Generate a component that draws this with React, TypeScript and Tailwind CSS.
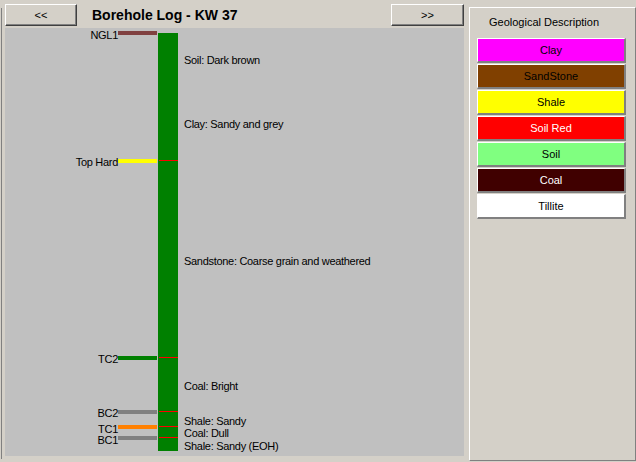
import React from 'react';

const markers = [
  { name: 'NGL1', top: 3, color: 'bg-[#804040]', labelTop: 1, red: null },
  { name: 'Top Hard', top: 131, color: 'bg-[#ffff00]', labelTop: 128, red: 132 },
  { name: 'TC2', top: 328, color: 'bg-[#008000]', labelTop: 325, red: 329 },
  { name: 'BC2', top: 382, color: 'bg-[#808080]', labelTop: 379, red: 383 },
  { name: 'TC1', top: 397, color: 'bg-[#ff8000]', labelTop: 395, red: 398 },
  { name: 'BC1', top: 408, color: 'bg-[#808080]', labelTop: 406, red: 409 },
];

const descriptions = [
  { text: 'Soil: Dark brown', top: 26 },
  { text: 'Clay: Sandy and grey', top: 90 },
  { text: 'Sandstone: Coarse grain and weathered', top: 227 },
  { text: 'Coal: Bright', top: 352 },
  { text: 'Shale: Sandy', top: 387 },
  { text: 'Coal: Dull', top: 399 },
  { text: 'Shale: Sandy (EOH)', top: 412 },
];

const legend = [
  { name: 'Clay', cls: 'bg-[#ff00ff] text-black' },
  { name: 'SandStone', cls: 'bg-[#804000] text-black' },
  { name: 'Shale', cls: 'bg-[#ffff00] text-black' },
  { name: 'Soil Red', cls: 'bg-[#ff0000] text-white' },
  { name: 'Soil', cls: 'bg-[#80ff80] text-black' },
  { name: 'Coal', cls: 'bg-[#400000] text-white' },
  { name: 'Tillite', cls: 'bg-white text-black' },
];

const NavButton = ({ label, className }: { label: string; className?: string }) => (
  <button
    className={`h-[22px] bg-[#d4d0c8] border border-t-white border-l-white border-r-[#404040] border-b-[#404040] shadow-[inset_-1px_-1px_0_#808080] text-[11px] leading-[13px] text-black ${className ?? ''}`}
  >
    {label}
  </button>
);

const App = () => {
  return (
    <div
      className="w-[636px] h-[462px] bg-[#d4d0c8] flex overflow-hidden text-black"
      style={{ fontFamily: '"Liberation Sans", Arial, sans-serif' }}
    >
      <div className="w-[1px] ml-[1px] mt-[8px] h-[451px] bg-[#808080]" />

      {/* left: log */}
      <div className="ml-[3px] w-[459px] flex flex-col">
        <div className="flex items-center mt-[4px] h-[22px]">
          <NavButton label="<<" className="w-[72px]" />
          <h1 className="ml-[15px] text-[14px] leading-[16px] font-bold mt-[-1px]">Borehole Log - KW 37</h1>
          <NavButton label=">>" className="w-[73px] ml-auto" />
        </div>

        <div className="mt-[2px] h-[428px] bg-[#c0c0c0] relative text-[11px] leading-[13px] tracking-[-0.3px]">
          <div className="absolute left-[153px] top-[5px] w-[20px] h-[418px] bg-[#008000]" />

          {markers.map((m) => (
            <React.Fragment key={m.name}>
              <div className={`absolute left-[113px] w-[39px] h-[4px] ${m.color}`} style={{ top: m.top }} />
              <div className="absolute left-0 w-[113px] text-right whitespace-nowrap" style={{ top: m.labelTop }}>
                {m.name}
              </div>
              {m.red !== null && (
                <div className="absolute left-[154px] w-[19px] h-[1px] bg-[#ff0000]" style={{ top: m.red }} />
              )}
            </React.Fragment>
          ))}

          {descriptions.map((d) => (
            <div key={d.text} className="absolute left-[179px] whitespace-nowrap" style={{ top: d.top }}>
              {d.text}
            </div>
          ))}
        </div>
      </div>

      {/* right: legend */}
      <div className="ml-[5px] mt-[7px] h-[454px] flex-1 border border-t-white border-l-white border-r-[#808080] border-b-[#808080] pl-[7px] text-[11px] leading-[14px]">
        <div className="pt-[7px] pl-[12px] h-[21px]">Geological Description</div>
        <div className="mt-[9px] flex flex-col w-[149px]">
          {legend.map((l) => (
            <div
              key={l.name}
              className={`h-[25px] mb-[1px] flex items-center justify-center border-t border-l border-t-white border-l-white border-r-2 border-b-2 border-r-[#808080] border-b-[#808080] ${l.cls}`}
            >
              {l.name}
            </div>
          ))}
        </div>
      </div>
    </div>
  );
};

export default App;
